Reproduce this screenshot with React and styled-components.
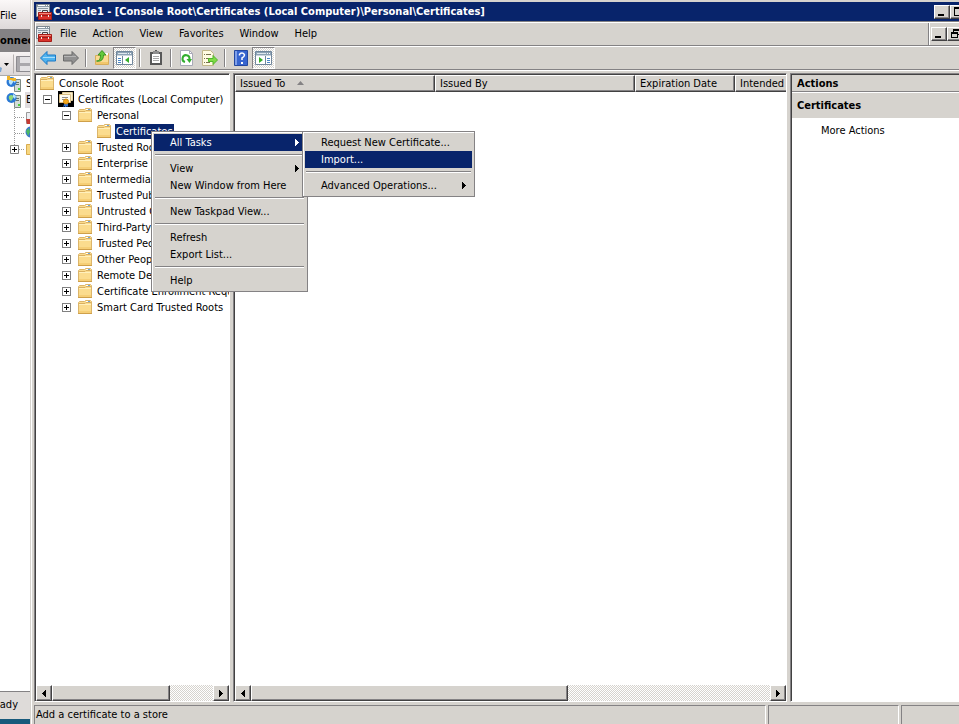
import React from "react";
import styled, { createGlobalStyle, css } from "styled-components";

const tree = [
  { level: 0, label: "Console Root" },
  { level: 1, label: "Certificates (Local Computer)", sign: "minus", icon: "cert" },
  { level: 2, label: "Personal", sign: "minus" },
  { level: 3, label: "Certificates", selected: true },
  { level: 2, label: "Trusted Root Certification Authorities", sign: "plus" },
  { level: 2, label: "Enterprise Trust", sign: "plus" },
  { level: 2, label: "Intermediate Certification Authorities", sign: "plus" },
  { level: 2, label: "Trusted Publishers", sign: "plus" },
  { level: 2, label: "Untrusted Certificates", sign: "plus" },
  { level: 2, label: "Third-Party Root Certification Authorities", sign: "plus" },
  { level: 2, label: "Trusted People", sign: "plus" },
  { level: 2, label: "Other People", sign: "plus" },
  { level: 2, label: "Remote Desktop", sign: "plus" },
  { level: 2, label: "Certificate Enrollment Requests", sign: "plus" },
  { level: 2, label: "Smart Card Trusted Roots", sign: "plus" },
];

const contextMenu = [
  { label: "All Tasks", arrow: true, active: true },
  null,
  { label: "View", arrow: true },
  { label: "New Window from Here" },
  null,
  { label: "New Taskpad View..." },
  null,
  { label: "Refresh" },
  { label: "Export List..." },
  null,
  { label: "Help" },
];

const subMenu = [
  { label: "Request New Certificate..." },
  { label: "Import...", active: true },
  null,
  { label: "Advanced Operations...", arrow: true },
];

const FolderIcon = () => (
  <svg width="16" height="16" viewBox="0 0 16 16" aria-hidden="true">
    <path d="M1.500 14.500v-11l1-1h5l1-1h5l1 1v12z" fill="#fbdc8e" stroke="#dcb56a" />
    <path d="M9 2h4v2H9z" fill="#fff" />
    <path d="M11 2h2v1h-2z" fill="#6fa6d8" />
    <path d="M2 4.500h6l1-1h5" fill="none" stroke="#d9b062" />
    <path d="M2 5.500h12" stroke="#fff0bd" />
    <path d="M2 12h12v2H2z" fill="#f6cf77" />
    <path d="M1 14.500h14" stroke="#cfa04a" />
  </svg>
);

const CertIcon = () => (
  <svg width="16" height="16" viewBox="0 0 16 16" aria-hidden="true">
    <path d="M0 0h16v16H0z" fill="#000" />
    <path d="M4.500 1.500h10v8h-10z" fill="#f8edcf" stroke="#e3cf9c" />
    <path d="M1.500 3.500h11v8h-11z" fill="#fffdf2" stroke="#d8bd82" />
    <path d="M4 6.500h6M4 8.500h3" stroke="#8d8d8d" />
    <path d="M7 11l-2 5 2-1v1h1l1-1 1 1v-5z" fill="#2f6ed0" />
    <circle cx="8" cy="10.500" r="2.500" fill="#f5a91c" stroke="#c98410" />
  </svg>
);

const ConsoleIcon = () => (
  <svg width="16" height="16" viewBox="0 0 16 16" aria-hidden="true">
    <path d="M.5.5h13v12H.5z" fill="#e7ecef" stroke="#7d8890" />
    <path d="M1 1h12v2H1z" fill="#8b9ba6" />
    <path d="M2 1.500h7M10 1.500h1M12 1.500h1" stroke="#fff" />
    <path d="M2 4.500h10M2 6.500h3M2 8.500h1" stroke="#8b9ba6" />
    <path d="M6.500 8V6.500h5V8" fill="none" stroke="#444" />
    <path d="M2.500 8.500h13v7h-13z" fill="#d8322a" stroke="#a51c16" />
    <path d="M3 9.500h12" stroke="#f28a7d" />
    <path d="M3 11.500h12" stroke="#96201a" />
    <path d="M5 11h1v2H5zM12 11h1v2h-1z" fill="#f2e9e4" />
  </svg>
);

const ArrowIcon = ({ back }) => (
  <svg width="18" height="16" viewBox="0 0 18 16" aria-hidden="true">
    {back ? (
      <path d="M1.500 8L8 1.500V5h8.500v6H8v3.500z" fill="#4fb3ef" stroke="#1c78c4" />
    ) : (
      <path d="M16.500 8L10 1.500V5H1.500v6H10v3.500z" fill="#919191" stroke="#6a6a6a" />
    )}
    {back ? <path d="M4 7.500h12" stroke="#a9defa" /> : <path d="M2 6.500h12" stroke="#b5b5b5" />}
  </svg>
);

const UpIcon = () => (
  <svg width="16" height="16" viewBox="0 0 16 16" aria-hidden="true">
    <path d="M1.500 5.500h6l1-2h6v11h-13z" fill="#f9da92" stroke="#d8ae5c" />
    <path d="M10 3h4v2h-4z" fill="#fff" />
    <path d="M2 12h12v2H2z" fill="#f2c76c" />
    <path d="M2.500 11C6 11 6.500 8 6.500 5H4l4-4.500L12 5H9.500c0 4-2 7-7 6z" fill="#63c93a" stroke="#3a9420" />
  </svg>
);

const PanelIcon = ({ right }) => (
  <svg width="17" height="14" viewBox="0 0 17 14" aria-hidden="true">
    <path d="M.5.5h16v13H.5z" fill="#fff" stroke="#71879c" />
    <path d="M1 1h15v3H1z" fill="#8da2b5" />
    <path d="M2 2.500h9" stroke="#dfe7ed" />
    <path d="M12 2h1v1h-1zM14 2h1v1h-1z" fill="#fff" />
    <path d="M1 4.500h15" stroke="#c9d3db" />
    {right ? (
      <>
        <path d="M10.500 5v8" stroke="#71879c" />
        <path d="M4 6v6l4-3z" fill="#35ae28" />
        <path d="M12 7.500h3M12 9.500h3M12 11.500h3" stroke="#4a86c5" />
      </>
    ) : (
      <>
        <path d="M6.500 5v8" stroke="#71879c" />
        <path d="M13 6v6L9 9z" fill="#35ae28" />
        <path d="M2 7.500h3M2 9.500h3M2 11.500h3" stroke="#4a86c5" />
      </>
    )}
  </svg>
);

const ClipboardIcon = () => (
  <svg width="14" height="16" viewBox="0 0 14 16" aria-hidden="true">
    <path d="M1 2h12v13H1z" fill="#585858" />
    <path d="M3 4h8v9H3z" fill="#fff" />
    <path d="M4 1h6v3H4z" fill="#8e8e8e" />
    <path d="M6 0h2v1H6z" fill="#585858" />
    <path d="M4 6.500h6M4 8.500h6M4 10.500h6" stroke="#a8a8a8" />
  </svg>
);

const RefreshIcon = () => (
  <svg width="16" height="16" viewBox="0 0 16 16" aria-hidden="true">
    <path d="M1.500.5h9l3 3v12h-12z" fill="#fff" stroke="#a9a9b8" />
    <path d="M10.500.5v3h3" fill="none" stroke="#a9a9b8" />
    <path d="M6 12A3.500 3.500 0 1 1 10.500 9" fill="none" stroke="#33ae30" strokeWidth="2" />
    <path d="M7.500 9h5.500l-2.500 4z" fill="#33ae30" />
  </svg>
);

const ExportIcon = () => (
  <svg width="16" height="16" viewBox="0 0 16 16" aria-hidden="true">
    <path d="M.5.5h8l3 3v12H.5z" fill="#fffbe2" stroke="#c2b78a" />
    <path d="M2 4.500h1M4 4.500h5M2 8.500h1M4 8.500h3M2 12.500h1M4 12.500h4" stroke="#77714e" />
    <path d="M6.500 8.500H11v-3l4.500 4.500-4.500 4.500v-3H6.500z" fill="#7edb45" stroke="#52b52c" />
  </svg>
);

const HelpIcon = () => (
  <svg width="14" height="16" viewBox="0 0 14 16" aria-hidden="true">
    <path d="M.5.5h13v15H.5z" fill="#3765cf" stroke="#24489f" />
    <path d="M1 1h2v14H1z" fill="#7f9fe8" />
    <path d="M5.500 5.500V4.500q.5-1.500 2.500-1.500t2.500 2q0 1.500-2.500 3v2" fill="none" stroke="#fff" strokeWidth="1.500" />
    <path d="M7 12h2v2H7z" fill="#fff" />
  </svg>
);

const ServerIcon = ({ globe }) => (
  <svg width="16" height="16" viewBox="0 0 16 16" aria-hidden="true">
    <path d="M8.500 3.500h6v12h-6z" fill="#d3ddd7" stroke="#7d8983" />
    <path d="M10 6.500h3M10 8.500h3" stroke="#65736b" />
    <path d="M12 12h2v2h-2z" fill="#4bd03a" />
    <circle cx="5.500" cy="6" r="5" fill="#2a78d4" />
    <path d="M3 4q3-2 4 0t-2 5q-3-2-2-5z" fill={globe ? "#91d978" : "#b9e6fc"} />
    <path d="M7 2l3 2-1 3-2-2z" fill="#b9e6fc" />
    {!globe && <path d="M1 0h3v2h6v3H7L5 4H1z" fill="#f0b428" />}
  </svg>
);

const Triangle = ({ left }) => (
  <svg width="4" height="7" viewBox="0 0 4 7" shapeRendering="crispEdges" aria-hidden="true">
    <path
      d={left ? "M3 0h1v7H3V6H2V5H1V4H0V3h1V2h1V1h1z" : "M0 0h1v1h1v1h1v1h1v1H3v1H2v1H1v1H0z"}
      fill="currentColor"
    />
  </svg>
);

const Glyph = ({ kind }) => (
  <svg width="11" height="10" viewBox="0 0 11 10" shapeRendering="crispEdges" aria-hidden="true">
    {kind === "min" && <path d="M1 7h6v2H1z" />}
    {kind === "max" && <path d="M1 0h9v9H1zM2 2v6h7V2z" fillRule="evenodd" />}
    {kind === "restore" && (
      <path d="M3 0h7v6H8v3H1V3h2zM4 2v1h4v2h1V2zM2 5v3h5V5z" fillRule="evenodd" />
    )}
    {kind === "close" && <path d="M1 1h2l2 2 2-2h2L6 5l3 4H7L5 6 3 9H1l3-4z" />}
  </svg>
);

const Menu = ({ items, label, ...rest }) => (
  <MenuBox aria-label={label} {...rest}>
    {items.map((item, i) =>
      item ? (
        <li key={i}>
          <MenuItem $active={item.active}>
            {item.label}
            {item.arrow && <Triangle />}
          </MenuItem>
        </li>
      ) : (
        <MenuLine key={i} />
      )
    )}
  </MenuBox>
);

const ScrollBar = ({ thumb }) => (
  <ScrollTrack>
    <ScrollButton aria-label="Scroll left"><Triangle left /></ScrollButton>
    <ScrollRail>
      <ScrollThumb $size={thumb} />
    </ScrollRail>
    <ScrollButton aria-label="Scroll right"><Triangle /></ScrollButton>
  </ScrollTrack>
);

const App = () => {
  return (
    <>
      <GlobalStyle />
      <Desktop>
        <BackWindow>
          <BackMenu>File</BackMenu>
          <BackTitle>onnections</BackTitle>
          <BackTools>
            <svg width="30" height="20" viewBox="0 0 30 20" aria-hidden="true">
              <path d="M0 13l2 1-1 4H0z" fill="#7aa3cf" />
              <path d="M4 9h5l-2.500 3z" />
              <path d="M13.500.5v19" stroke="#b5b0b0" />
              <path d="M16.500 2.500h15v15h-15z" fill="#aaa8ac" stroke="#8d8b90" />
              <path d="M20 3h10v6H20zM20 12h10v5H20z" fill="#e4e2e4" />
            </svg>
          </BackTools>
          <BackTree>
            <BackRow><ServerIcon />Start Page</BackRow>
            <BackRow $shade><ServerIcon globe />EX</BackRow>
            <svg width="30" height="64" viewBox="0 0 30 64" aria-hidden="true">
              <path d="M14.500 0v40M15 9.500h10M15 25.500h10M19 41.500h6" stroke="#999" strokeDasharray="1 1" />
              <path d="M26.500 4.500h8v11h-8z" fill="#eceef2" stroke="#999" />
              <path d="M26 11h4v5h-3z" fill="#c63a33" />
              <circle cx="31" cy="24" r="5.500" fill="#3c76cf" />
              <path d="M26 23l3-3 1 4-2 4z" fill="#4cb963" />
              <path d="M10.500 37.500h8v8h-8z" fill="#fff" stroke="#808080" />
              <path d="M12 41.500h5M14.500 39v5" stroke="#000" />
              <path d="M26.500 36.500h8v10h-8z" fill="#f7d67f" stroke="#d8ac50" />
            </svg>
          </BackTree>
          <BackStatus>Ready</BackStatus>
        </BackWindow>

        <Window>
          <TitleBar>
            <ConsoleIcon />
            <h1>Console1 - [Console Root\Certificates (Local Computer)\Personal\Certificates]</h1>
            <WindowButton aria-label="Minimize"><Glyph kind="min" /></WindowButton>
            <WindowButton aria-label="Maximize"><Glyph kind="max" /></WindowButton>
            <WindowButton aria-label="Close"><Glyph kind="close" /></WindowButton>
          </TitleBar>

          <Bands>
            <MenuBar>
              <ConsoleIcon />
              <nav>
                {["File", "Action", "View", "Favorites", "Window", "Help"].map((name) => (
                  <MenuName key={name}>{name}</MenuName>
                ))}
              </nav>
              <ChildButtons>
                <WindowButton aria-label="Minimize child"><Glyph kind="min" /></WindowButton>
                <WindowButton aria-label="Restore child"><Glyph kind="restore" /></WindowButton>
                <WindowButton aria-label="Close child"><Glyph kind="close" /></WindowButton>
              </ChildButtons>
            </MenuBar>
            <ToolBar>
              <ToolButton aria-label="Back"><ArrowIcon back /></ToolButton>
              <ToolButton aria-label="Forward"><ArrowIcon /></ToolButton>
              <ToolLine />
              <ToolButton aria-label="Up one level"><UpIcon /></ToolButton>
              <ToolButton aria-label="Show console tree" $pressed><PanelIcon /></ToolButton>
              <ToolLine />
              <ToolButton aria-label="Paste"><ClipboardIcon /></ToolButton>
              <ToolLine />
              <ToolButton aria-label="Refresh"><RefreshIcon /></ToolButton>
              <ToolButton aria-label="Export list"><ExportIcon /></ToolButton>
              <ToolLine />
              <ToolButton aria-label="Help"><HelpIcon /></ToolButton>
              <ToolButton aria-label="Show action pane" $pressed><PanelIcon right /></ToolButton>
            </ToolBar>
          </Bands>

          <Panes>
            <Pane>
              <TreeList>
                {tree.map((node, i) => (
                  <TreeRow key={i} $level={node.level}>
                    {node.level > 0 && (
                      <Slot>
                        {node.sign && (
                          <svg width="9" height="9" viewBox="0 0 9 9" shapeRendering="crispEdges" aria-hidden="true">
                            <path d="M.5.5h8v8h-8z" fill="#fff" stroke="#808080" />
                            <path d={node.sign === "plus" ? "M2 4.500h5M4.500 2v5" : "M2 4.500h5"} stroke="#000" />
                          </svg>
                        )}
                      </Slot>
                    )}
                    {node.icon === "cert" ? <CertIcon /> : <FolderIcon />}
                    <TreeLabel $selected={node.selected}>{node.label}</TreeLabel>
                  </TreeRow>
                ))}
              </TreeList>
              <ScrollBar thumb={73} />
            </Pane>
            <Pane>
              <ListTable>
                <thead>
                  <tr>
                    <HeadCell $width={200}>
                      Issued To
                      <svg width="7" height="4" viewBox="0 0 7 4" aria-hidden="true">
                        <path d="M0 4l3.500-4L7 4z" fill="#848284" />
                      </svg>
                    </HeadCell>
                    <HeadCell $width={200}>Issued By</HeadCell>
                    <HeadCell $width={100}>Expiration Date</HeadCell>
                    <HeadCell>Intended Purposes</HeadCell>
                  </tr>
                </thead>
              </ListTable>
              <ScrollBar thumb={61} />
            </Pane>
            <Pane>
              <ActionsTitle>Actions</ActionsTitle>
              <ActionsGroup>Certificates</ActionsGroup>
              <MoreActions>More Actions</MoreActions>
            </Pane>
          </Panes>

          <StatusBar>
            <StatusCell>Add a certificate to a store</StatusCell>
            <StatusCell />
            <StatusCell />
          </StatusBar>
        </Window>

        <ContextMenu items={contextMenu} label="Certificates" />
        <SubMenu items={subMenu} label="All Tasks" />
      </Desktop>
    </>
  );
};

const GlobalStyle = createGlobalStyle`
  *{
    box-sizing: border-box;
  }
  body{
    margin: 0;
    font: 11px/16px "DejaVu Sans Condensed", Tahoma, "DejaVu Sans", sans-serif;
    color: #000;
  }
  h1, h2, h3, ul{
    margin: 0;
    padding: 0;
    font-size: inherit;
    list-style: none;
  }
  button{
    font: inherit;
    color: inherit;
    border: 0;
    padding: 0;
    background: none;
  }
  svg{
    flex: none;
  }
`;

const dither = css`
  background: repeating-conic-gradient(#d6d3ce 0 25%, #fff 0 50%) 0 0 / 2px 2px;
`;

const raised = css`
  border: 1px solid;
  border-color: #fff #424142 #424142 #fff;
  box-shadow: inset -1px -1px #848284;
  background: #d6d3ce;
`;

const Desktop = styled.div`
  position: relative;
  display: grid;
  grid-template-columns: 30px minmax(0, 1fr);
  height: 100vh;
  overflow: hidden;
  white-space: nowrap;
`;

const BackWindow = styled.div`
  display: flex;
  flex-direction: column;
  overflow: hidden;
  background: #fff;
  border-bottom: 5px solid #175a7c;
`;

const BackMenu = styled.div`
  height: 29px;
  line-height: 32px;
  background: linear-gradient(#fbf8f8, #ded9d9);
`;

const BackTitle = styled.div`
  height: 23px;
  line-height: 24px;
  font-weight: bold;
  background: #848284;
`;

const BackTools = styled.div`
  height: 24px;
  background: linear-gradient(#f7f3f3, #dcd7d7);
  border-bottom: 1px solid #aaa;
  padding-top: 2px;
`;

const BackTree = styled.div`
  flex: 1;
`;

const BackRow = styled.div`
  display: flex;
  height: 16px;
  gap: 4px;
  padding-left: 6px;
  background: ${(props) => (props.$shade ? "linear-gradient(90deg, #fff 25px, #dedbde 25px)" : "none")};
`;

const BackStatus = styled.div`
  display: flex;
  justify-content: flex-end;
  height: 28px;
  padding-right: 12px;
  line-height: 26px;
  border-top: 1px solid #848284;
  background: #dedbd9;
`;

/* the window runs on past the right edge of the screen */
const Window = styled.div`
  display: flex;
  flex-direction: column;
  margin-right: -32px;
  padding: 2px 4px 1px;
  background: #d6d3ce;
  box-shadow: inset 1px 0 #d6d3ce, inset 2px 0 #fff;
`;

const TitleBar = styled.header`
  display: flex;
  align-items: center;
  height: 19px;
  padding: 0 3px 0 2px;
  color: #fff;
  background: #08246b;
  h1{
    flex: 1;
    padding-left: 1px;
    line-height: 18px;
  }
`;

const WindowButton = styled.button`
  ${raised}
  width: 16px;
  height: 14px;
  color: #000;
  display: flex;
  align-items: center;
  justify-content: center;
  &:last-child{
    margin-left: 2px;
  }
`;

const Bands = styled.div`
  margin: 0 0 2px;
  border: 1px solid;
  border-color: #848284 transparent #fff #848284;
`;

const MenuBar = styled.div`
  display: flex;
  align-items: center;
  height: 24px;
  border-top: 1px solid #fff;
  border-bottom: 1px solid #848284;
  border-left: 1px solid #fff;
  nav{
    flex: 1;
    line-height: 18px;
  }
`;

const MenuName = styled.button`
  padding: 0 8px;
`;

const ChildButtons = styled.div`
  display: flex;
  align-items: center;
  height: 22px;
  padding: 0 5px 0 2px;
  border-left: 1px solid #848284;
  box-shadow: inset 1px 0 #fff;
`;

const ToolBar = styled(MenuBar)`
  padding-left: 0;
`;

const ToolButton = styled.button`
  display: flex;
  align-items: center;
  justify-content: center;
  width: 23px;
  height: 22px;
  border: 1px solid transparent;
  ${(props) =>
    props.$pressed &&
    css`
      ${dither}
      border-color: #848284 #fff #fff #848284;
    `}
`;

const ToolLine = styled.span`
  width: 2px;
  height: 18px;
  margin: 0 3px;
  border-left: 1px solid #848284;
  border-right: 1px solid #fff;
`;

const Panes = styled.main`
  flex: 1;
  min-height: 0;
  display: grid;
  grid-template-columns: 196px minmax(0, 1fr) 197px;
  column-gap: 3px;
`;

const Pane = styled.section`
  display: flex;
  flex-direction: column;
  min-width: 0;
  overflow: hidden;
  background: #fff;
  border: 1px solid;
  border-color: #848284 #fff #fff #848284;
  box-shadow: inset 1px 1px #424142;
  padding: 1px 0 0 1px;
`;

const TreeList = styled.ul`
  flex: 1;
  overflow: hidden;
`;

const TreeRow = styled.li`
  display: flex;
  align-items: center;
  height: 16px;
  padding-left: ${(props) => 3 + 19 * Math.max(props.$level - 1, 0)}px;
`;

const Slot = styled.span`
  display: flex;
  flex: none;
  width: 19px;
  padding-left: 4px;
`;

const TreeLabel = styled.span`
  height: 15px;
  line-height: 15px;
  margin-left: 3px;
  padding: 0 1px;
  color: ${(props) => (props.$selected ? "#fff" : "#000")};
  background: ${(props) => (props.$selected ? "#08246b" : "transparent")};
`;

const ListTable = styled.table`
  width: 100%;
  table-layout: fixed;
  border-collapse: separate;
  border-spacing: 0;
  margin-bottom: auto;
`;

const HeadCell = styled.th`
  width: ${(props) => (props.$width ? `${props.$width}px` : "auto")};
  height: 17px;
  padding: 1px 0 0 4px;
  font-weight: normal;
  line-height: 14px;
  text-align: left;
  overflow: hidden;
  ${raised}
  svg{
    margin: 0 0 2px 12px;
  }
  &:last-child{
    border-right: 0;
    box-shadow: inset 0 -1px #848284;
  }
`;

const ScrollTrack = styled.div`
  display: flex;
  height: 16px;
`;

const ScrollButton = styled.button`
  ${raised}
  display: flex;
  align-items: center;
  justify-content: center;
  width: 16px;
`;

const ScrollRail = styled.div`
  flex: 1;
  ${dither}
`;

const ScrollThumb = styled.div`
  ${raised}
  width: ${(props) => props.$size}%;
  height: 16px;
`;

const ActionsTitle = styled.h2`
  height: 17px;
  padding-left: 5px;
  line-height: 18px;
  background: #d6d3ce;
  border-bottom: 1px solid #848284;
`;

const ActionsGroup = styled.h3`
  height: 26px;
  padding-left: 5px;
  line-height: 26px;
  background: #d6d3ce;
  border-top: 1px solid #fff;
`;

const MoreActions = styled.button`
  height: 26px;
  padding-left: 29px;
  text-align: left;
`;

const StatusBar = styled.footer`
  display: grid;
  grid-template-columns: minmax(0, 1fr) 131px 86px;
  column-gap: 2px;
  height: 18px;
  margin-top: 3px;
`;

const StatusCell = styled.div`
  padding-left: 1px;
  line-height: 18px;
  border: 1px solid;
  border-color: #848284 #fff #fff #848284;
`;

const MenuBox = styled.ul`
  position: absolute;
  padding: 2px;
  background: #d6d3ce;
  border: 1px solid #848284;
  box-shadow: inset 1px 1px #fff;
`;

const ContextMenu = styled(Menu)`
  top: 131px;
  left: 151px;
  width: 157px;
`;

const SubMenu = styled(Menu)`
  top: 131px;
  left: 302px;
  width: 173px;
`;

const MenuItem = styled.button`
  display: flex;
  align-items: center;
  justify-content: space-between;
  width: 100%;
  height: 17px;
  padding: 0 6px 0 16px;
  color: ${(props) => (props.$active ? "#fff" : "#000")};
  background: ${(props) => (props.$active ? "#08246b" : "transparent")};
`;

const MenuLine = styled.li`
  height: 2px;
  margin: 3px 1px 4px;
  border-top: 1px solid #848284;
  border-bottom: 1px solid #fff;
`;

export default App;
